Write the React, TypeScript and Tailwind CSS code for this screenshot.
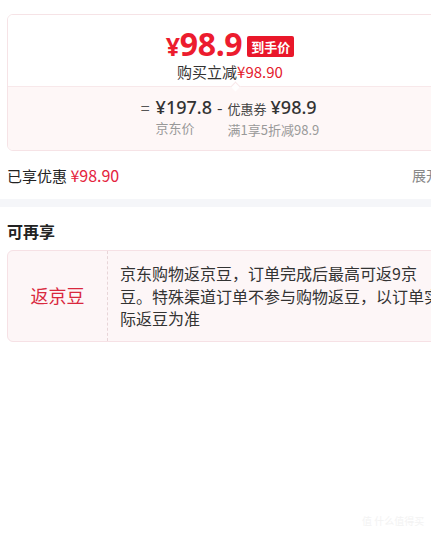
const font = "font-['Microsoft_YaHei','Noto_Sans_CJK_SC',sans-serif]";

export default function App() {
  return (
    <div className={`w-[431px] h-[537px] overflow-hidden bg-white relative ${font}`}>
      <div className="w-[460px]">
        {/* price card */}
        <div className="px-[7px] pt-[14px]">
          <div className="rounded-md border border-[#f6e3e6] overflow-hidden">
            <div className="h-[71px] bg-white flex flex-col items-center pt-[11px]">
              <div className="flex items-center">
                <span className="text-[#ec1c2e] font-bold text-[32px] leading-[35px] font-['Noto_Sans',sans-serif] tracking-[-0.3px]">
                  <span className="text-[25px]">¥</span>98.9
                </span>
                <span className="ml-[5px] mt-[2px] bg-[#e9172a] text-white text-[13px] font-bold leading-[21px] px-[4px] rounded-[2px]">
                  到手价
                </span>
              </div>
              <div className="text-[15px] leading-[20px] text-[#333] mt-[-2px]">
                购买立减<span className="text-[#e4202c]">¥98.90</span>
              </div>
            </div>
            <div className="relative h-[64px] bg-[#fef7f7] border-t border-[#f8e8ea] flex justify-center pt-[8px]">
              <span className="absolute -top-[4px] left-[224px] w-[7px] h-[7px] bg-white rotate-45 border-l border-t border-[#f8e8ea]" />
              <div className="flex items-start text-[#333]">
                <span className="text-[16px] leading-[24px] mr-[6px] text-[#555]">=</span>
                <div className="flex flex-col">
                  <span className="text-[18px] leading-[24px] font-medium font-['Noto_Sans',sans-serif]">¥197.8</span>
                  <span className="text-[13px] leading-[18px] text-[#999]">京东价</span>
                </div>
                <span className="text-[16px] leading-[24px] mx-[5px]">-</span>
                <div className="flex flex-col">
                  <span className="leading-[24px]">
                    <span className="text-[13px] text-[#444]">优惠券</span>
                    <span className="text-[18px] font-medium ml-[4px] font-['Noto_Sans',sans-serif]">¥98.9</span>
                  </span>
                  <span className="text-[13px] leading-[18px] text-[#999]">满1享5折减98.9</span>
                </div>
              </div>
            </div>
          </div>
        </div>

        {/* discount row */}
        <div className="flex items-center justify-between px-[7px] h-[48px]">
          <span className="text-[15px] text-[#222]">
            已享优惠 <span className="text-[#e4233d] text-[16px]">¥98.90</span>
          </span>
          <span className="text-[14px] text-[#888] mr-[13px]">展开</span>
        </div>

        <div className="h-[8px] bg-[#f5f6f9]" />

        {/* more */}
        <div className="px-[7px] pt-[14px]">
          <div className="text-[16px] font-bold text-[#222] leading-[20px]">可再享</div>
          <div className="mt-[9px] flex rounded-md border border-[#f6e1e5] bg-[#fdf6f7]">
            <div className="w-[100px] shrink-0 flex items-center justify-center border-r border-dashed border-[#e8d5d8]">
              <span className="text-[18px] text-[#d9283e]">返京豆</span>
            </div>
            <div className="w-[336px] pl-[12px] py-[11px] text-[16px] leading-[22.5px] text-[#333]">
              京东购物返京豆，订单完成后最高可返9京豆。特殊渠道订单不参与购物返豆，以订单实际返豆为准
            </div>
          </div>
        </div>
      </div>

      <div className="absolute left-[362px] top-[514px] text-[10px] leading-[14px] text-[#f3f3f3] whitespace-nowrap">
        值 什么值得买
      </div>
    </div>
  );
}
